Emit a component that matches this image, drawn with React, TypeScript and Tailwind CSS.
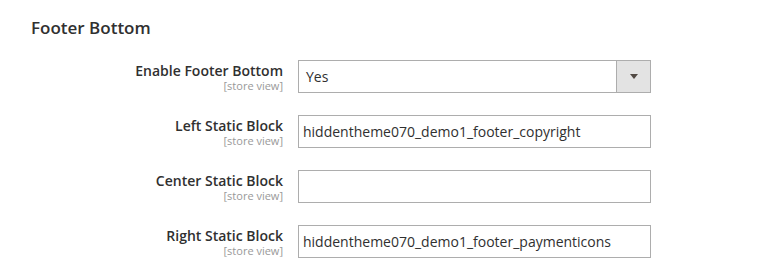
import React from 'react';

type Field = {
  label: string;
  value: string;
  kind: 'select' | 'text';
};

const fields: Field[] = [
  { label: 'Enable Footer Bottom', value: 'Yes', kind: 'select' },
  { label: 'Left Static Block', value: 'hiddentheme070_demo1_footer_copyright', kind: 'text' },
  { label: 'Center Static Block', value: '', kind: 'text' },
  { label: 'Right Static Block', value: 'hiddentheme070_demo1_footer_paymenticons', kind: 'text' },
];

const App: React.FC = () => {
  return (
    <div
      className="w-[765px] h-[275px] bg-white overflow-hidden text-[#303030]"
      style={{ fontFamily: '"Open Sans", "Noto Sans", sans-serif' }}
    >
      <div className="pl-[31px] pt-[16px]">
        <h2 className="text-[17px] leading-[23px] font-semibold text-[#303030]">Footer Bottom</h2>
      </div>

      <div className="mt-[21px] flex flex-col gap-[22px]">
        {fields.map(field => (
          <div key={field.label} className="flex items-start">
            {/* label column */}
            <div className="w-[283px] pt-[2px] flex flex-col items-end">
              <span className="text-[14px] leading-[17px] font-semibold text-[#303030]">{field.label}</span>
              <span className="text-[11px] leading-[13px] text-[#999999]">[store view]</span>
            </div>

            {/* control column */}
            <div className="ml-[15px] w-[353px]">
              {field.kind === 'select' ? (
                <div className="flex h-[33px] border border-[#adadad] bg-white">
                  <div className="flex-1 flex items-center pl-[7px] text-[14px]">{field.value}</div>
                  <div className="w-[34px] flex items-center justify-center bg-[#e3e3e3] border-l border-[#adadad]">
                    <span className="w-0 h-0 border-l-[4px] border-r-[4px] border-t-[5px] border-l-transparent border-r-transparent border-t-[#514943]" />
                  </div>
                </div>
              ) : (
                <div className="h-[33px] border border-[#adadad] bg-white flex items-center pl-[4px] text-[14px] whitespace-nowrap">
                  {field.value}
                </div>
              )}
            </div>
          </div>
        ))}
      </div>
    </div>
  );
};

export default App;
